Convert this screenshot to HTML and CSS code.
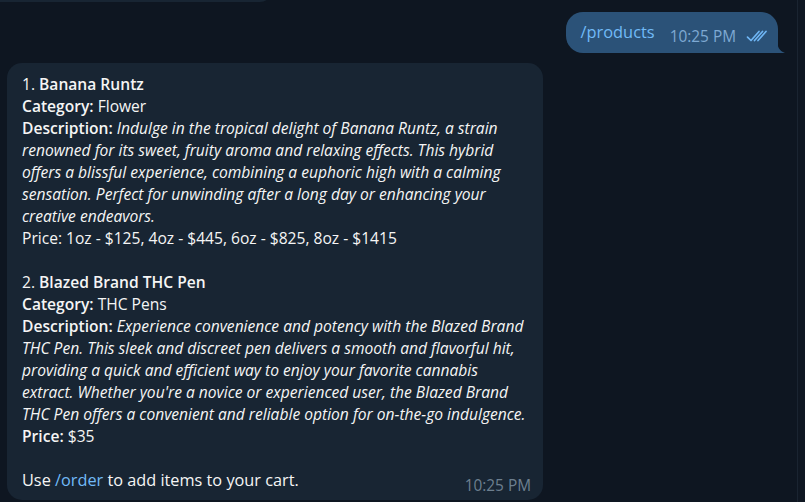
FILE: index.html
```html
<!DOCTYPE html>
<html>
<head>
<meta charset="utf-8">
<link rel="stylesheet" href="styles.css">
</head>
<body>
<div class="window">
  <div class="chat">
    <div class="bubble-prev"></div>
    <div class="row-out">
      <div class="bubble-out">
        <span class="out-text">/products</span>
        <span class="out-time">10:25 PM</span>
        <svg class="checks" width="22" height="12" viewBox="0 0 22 12"><path d="M1.5 7.2 L5 10.5 L13 1.5" fill="none" stroke="#6fb6f5" stroke-width="1.7" stroke-linecap="round" stroke-linejoin="round"/><path d="M8.5 10.5 L16.5 1.5 M12 10.5 L20 1.5" fill="none" stroke="#6fb6f5" stroke-width="1.7" stroke-linecap="round"/></svg>
        <svg class="tail" width="8" height="14" viewBox="0 0 8 14"><path d="M0 0 C0 7 2 12 8 14 L0 14 Z" fill="#2b5278"/></svg>
      </div>
    </div>
    <div class="bubble-in">
      <div class="msg">
        1. <b>Banana Runtz</b><br>
        <b>Category:</b> Flower<br>
        <b>Description:</b> <i>Indulge in the tropical delight of Banana Runtz, a strain<br>
        renowned for its sweet, fruity aroma and relaxing effects. This hybrid<br>
        offers a blissful experience, combining a euphoric high with a calming<br>
        sensation. Perfect for unwinding after a long day or enhancing your<br>
        creative endeavors.</i><br>
        Price: 1oz - $125, 4oz - $445, 6oz - $825, 8oz - $1415<br>
        <br>
        2. <b>Blazed Brand THC Pen</b><br>
        <b>Category:</b> THC Pens<br>
        <b>Description:</b> <i>Experience convenience and potency with the Blazed Brand<br>
        THC Pen. This sleek and discreet pen delivers a smooth and flavorful hit,<br>
        providing a quick and efficient way to enjoy your favorite cannabis<br>
        extract. Whether you're a novice or experienced user, the Blazed Brand<br>
        THC Pen offers a convenient and reliable option for on-the-go indulgence.</i><br>
        <b>Price:</b> $35<br>
        <br>
      </div>
      <div class="last-row">
        <span class="last-text">Use <span class="cmd">/order</span> to add items to your cart.</span>
        <span class="in-time">10:25 PM</span>
      </div>
    </div>
  </div>
  <div class="scrollbar"></div>
</div>
</body>
</html>
```

FILE: styles.css
```css
html, body {
  margin: 0;
  padding: 0;
  background: #0e1621;
  width: 805px;
  height: 502px;
  overflow: hidden;
  font-family: "Open Sans", "Noto Sans", sans-serif;
  color: #f5f5f5;
}

.window {
  display: flex;
  height: 502px;
}

.chat {
  width: 797px;
  display: flex;
  flex-direction: column;
}

.scrollbar {
  width: 8px;
  border-left: 1px solid #1a2431;
  background: #0f1722;
  box-sizing: border-box;
}

.bubble-prev {
  margin-top: -18px;
  margin-left: 0;
  width: 272px;
  height: 20px;
  background: #182533;
  border-radius: 0 0 12px 0;
}

.row-out {
  display: flex;
  justify-content: flex-end;
  margin-top: 10px;
  padding-right: 19px;
}

.bubble-out {
  position: relative;
  background: #2b5278;
  border-radius: 17px 17px 0 17px;
  height: 41px;
  box-sizing: border-box;
  padding: 0 10px 0 14px;
  display: flex;
  align-items: center;
  font-size: 16.4px;
}

.out-text {
  color: #71baf7;
  margin-top: -2px;
}

.out-time {
  color: #7ea9d3;
  font-size: 15.4px;
  margin-left: 15px;
  margin-top: 8px;
}

.checks {
  margin-left: 10px;
  margin-top: 7px;
}

.tail {
  position: absolute;
  right: -7px;
  bottom: 0;
}

.bubble-in {
  margin-top: 10px;
  margin-left: 7px;
  width: 536px;
  box-sizing: border-box;
  background: #182533;
  border-radius: 15px;
  padding: 10px 12px 3px 15px;
  font-size: 15.6px;
  line-height: 22px;
}

.msg {
  white-space: nowrap;
}

.msg b {
  font-weight: 600;
}

.msg i {
  font-style: italic;
}

.last-row {
  display: flex;
  justify-content: space-between;
  align-items: flex-start;
}

.last-text {
  font-size: 16.3px;
}

.cmd {
  color: #71baf7;
}

.in-time {
  color: #6d7f8f;
  font-size: 15.4px;
  margin-top: 6px;
}
```
